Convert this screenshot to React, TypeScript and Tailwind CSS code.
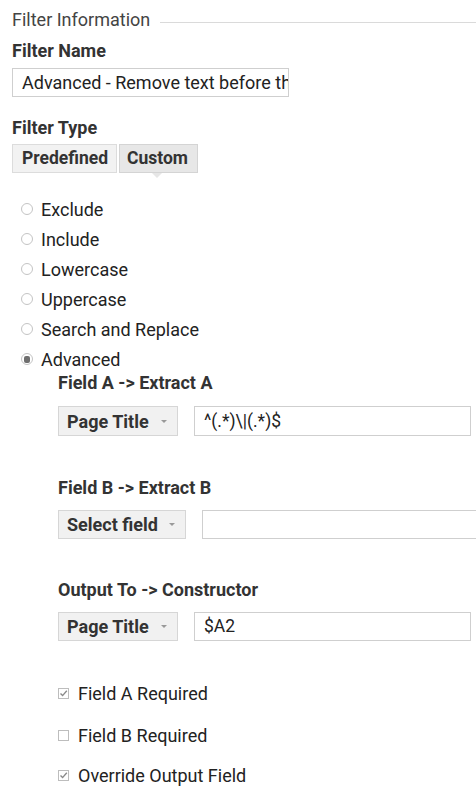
import React from 'react';

const RADIOS = ['Exclude', 'Include', 'Lowercase', 'Uppercase', 'Search and Replace', 'Advanced'];

function Radio({ label, checked }: { label: string; checked?: boolean }) {
  return (
    <div className="flex items-center h-[30px] pl-[9px]">
      <span className="w-[12px] h-[12px] rounded-full border border-[#c4c4c4] bg-white flex items-center justify-center">
        {checked && <span className="w-[6px] h-[7px] rounded-[2px] bg-[#6f6f6f]" />}
      </span>
      <span className="ml-[8px] text-[18px] text-[#222]">{label}</span>
    </div>
  );
}

function Select({ label, width }: { label: string; width: string }) {
  return (
    <div className={`${width} shrink-0 h-full flex items-center justify-between bg-[#f1f1f1] border border-[#d6d6d6] pl-[8px] pr-[10px]`}>
      <span className="text-[18px] font-bold text-[#333]">{label}</span>
      <span className="w-0 h-0 border-l-[3px] border-r-[3px] border-t-[3px] border-l-transparent border-r-transparent border-t-[#999]" />
    </div>
  );
}

function Checkbox({ label, checked }: { label: string; checked?: boolean }) {
  return (
    <div className="flex items-center h-[20px] pl-[46px]">
      <span className="w-[11px] h-[11px] border border-[#bdbdbd] bg-white flex items-center justify-center">
        {checked && (
          <svg width="9" height="9" viewBox="0 0 9 9">
            <path d="M1.5 4.5 L3.6 6.6 L7.8 1.8" stroke="#8a8a8a" strokeWidth="1.4" fill="none" />
          </svg>
        )}
      </span>
      <span className="ml-[9px] text-[18px] text-[#222]">{label}</span>
    </div>
  );
}

export default function App() {
  return (
    <div className="w-[476px] h-[795px] bg-white overflow-hidden pl-[12px] text-[#222]" style={{ fontFamily: 'Roboto, "Liberation Sans", sans-serif' }}>
      {/* header */}
      <div className="flex items-center h-[38px]">
        <span className="text-[18px] text-[#444]">Filter Information</span>
        <span className="flex-1 h-px bg-[#dadada] ml-[10px] mt-[6px]" />
      </div>

      <div className="mt-[3px] h-[20px] leading-[20px] text-[18px] font-bold text-[#333]">Filter Name</div>
      <div className="mt-[7px] h-[29px] w-[277px] border border-[#cfcfcf] flex items-center pl-[9px] overflow-hidden whitespace-nowrap text-[18px] text-[#222]">
        Advanced - Remove text before the
      </div>

      <div className="mt-[21px] h-[20px] leading-[20px] text-[18px] font-bold text-[#333]">Filter Type</div>
      <div className="relative mt-[6px] h-[29px] flex">
        <div className="w-[105px] h-full bg-[#f2f2f2] border border-[#dcdcdc] flex items-center pl-[9px] text-[17.5px] font-bold text-[#333]">Predefined</div>
        <div className="ml-[2px] w-[79px] h-full bg-[#e7e7e7] border border-[#d4d4d4] flex items-center pl-[7px] text-[17.5px] font-bold text-[#333]">Custom</div>
        <span className="absolute left-[140px] top-[29px] w-0 h-0 border-l-[5px] border-r-[5px] border-t-[5px] border-l-transparent border-r-transparent border-t-[#e6e6e6]" />
      </div>

      <div className="mt-[21px]">
        {RADIOS.map(r => (
          <Radio key={r} label={r} checked={r === 'Advanced'} />
        ))}
      </div>

      <div className="mt-[1px] pl-[46px]">
        <div className="h-[16px] leading-[16px] text-[18px] font-bold text-[#333]">Field A -&gt; Extract A</div>
        <div className="mt-[15px] h-[30px] flex">
          <Select label="Page Title" width="w-[120px]" />
          <div className="ml-[16px] w-[277px] shrink-0 h-full border border-[#cfcfcf] flex items-center pl-[9px] text-[17.5px] text-[#222]">^(.*)\|(.*)$</div>
        </div>

        <div className="mt-[44px] h-[16px] leading-[16px] text-[18px] font-bold text-[#333]">Field B -&gt; Extract B</div>
        <div className="mt-[14px] h-[29px] flex">
          <Select label="Select field" width="w-[128px]" />
          <div className="ml-[16px] w-[277px] shrink-0 h-full border border-[#cfcfcf]" />
        </div>

        <div className="mt-[43px] h-[16px] leading-[16px] text-[18px] font-bold text-[#333]">Output To -&gt; Constructor</div>
        <div className="mt-[14px] h-[29px] flex">
          <Select label="Page Title" width="w-[120px]" />
          <div className="ml-[16px] w-[277px] shrink-0 h-full border border-[#cfcfcf] flex items-center pl-[9px] text-[17.5px] text-[#222]">$A2</div>
        </div>
      </div>

      <div className="mt-[42px]">
        <Checkbox label="Field A Required" checked />
      </div>
      <div className="mt-[22px]">
        <Checkbox label="Field B Required" />
      </div>
      <div className="mt-[20px]">
        <Checkbox label="Override Output Field" checked />
      </div>
    </div>
  );
}
